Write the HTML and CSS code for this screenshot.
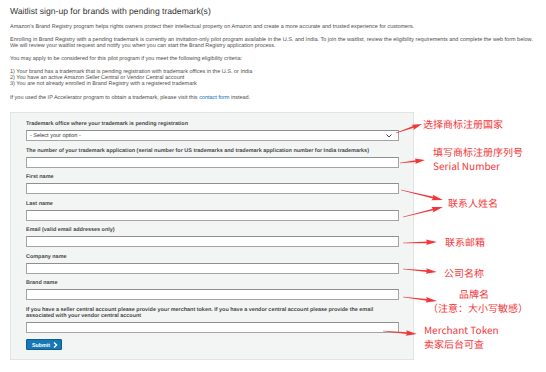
FILE: index.html
```html
<!DOCTYPE html>
<html lang="en">
<head>
<meta charset="utf-8">
<title>Waitlist sign-up</title>
<link rel="stylesheet" href="styles.css">
</head>
<body>
<div class="page">
  <h1 class="title">Waitlist sign-up for brands with pending trademark(s)</h1>
  <p class="intro">Amazon's Brand Registry program helps rights owners protect their intellectual property on Amazon and create a more accurate and trusted experience for customers.</p>
  <p>Enrolling in Brand Registry with a pending trademark is currently an invitation-only pilot program available in the U.S. and India. To join the waitlist, review the eligibility requirements and complete the web form below. We will review your waitlist request and notify you when you can start the Brand Registry application process.</p>
  <p>You may apply to be considered for this pilot program if you meet the following eligibility criteria:</p>
  <p>1) Your brand has a trademark that is pending registration with trademark offices in the U.S. or India<br>2) You have an active Amazon Seller Central or Vendor Central account<br>3) You are not already enrolled in Brand Registry with a registered trademark</p>
  <p class="last">If you used the IP Accelerator program to obtain a trademark, please visit this <a href="#" class="link">contact form</a> instead.</p>

  <form class="panel">
    <div class="field">
      <label class="label">Trademark office where your trademark is pending registration</label>
      <div class="select"><span>- Select your option -</span>
        <svg class="chev" width="6" height="4" viewBox="0 0 6 4"><path d="M0.5 0.5 L3 3 L5.5 0.5" fill="none" stroke="#333" stroke-width="0.9"/></svg>
      </div>
    </div>
    <div class="field">
      <label class="label">The number of your trademark application (serial number for US trademarks and trademark application number for India trademarks)</label>
      <div class="input"></div>
    </div>
    <div class="field">
      <label class="label">First name</label>
      <div class="input"></div>
    </div>
    <div class="field">
      <label class="label">Last name</label>
      <div class="input"></div>
    </div>
    <div class="field">
      <label class="label">Email (valid email addresses only)</label>
      <div class="input"></div>
    </div>
    <div class="field">
      <label class="label">Company name</label>
      <div class="input"></div>
    </div>
    <div class="field">
      <label class="label">Brand name</label>
      <div class="input"></div>
    </div>
    <div class="field">
      <label class="label">If you have a seller central account please provide your merchant token. If you have a vendor central account please provide the email associated with your vendor central account</label>
      <div class="input"></div>
    </div>
    <button type="button" class="submit">Submit
      <svg width="5" height="6" viewBox="0 0 5 6"><path d="M1 0.6 L3.6 3 L1 5.4" fill="none" stroke="#fff" stroke-width="1.3"/></svg>
    </button>
  </form>
</div>

<svg class="notes" width="546" height="372" viewBox="0 0 546 372">
  <g fill="#f2383a">
    <path transform="translate(396 133) rotate(-19.1)" d="M0 -0.35 L18.5 -0.9 L17.5 -2.8 L27.5 0 L17.5 2.8 L18.5 0.9 L0 0.35 Z"/>
    <path transform="translate(400 163) rotate(-6.8)" d="M0 -0.35 L16 -0.9 L15 -2.8 L25.2 0 L15 2.8 L16 0.9 L0 0.35 Z"/>
    <path transform="translate(401 190) rotate(13.4)" d="M0 -0.35 L33 -0.9 L32 -2.8 L43.2 0 L32 2.8 L33 0.9 L0 0.35 Z"/>
    <path transform="translate(403 217) rotate(-14)" d="M0 -0.35 L31 -0.9 L30 -2.8 L41.2 0 L30 2.8 L31 0.9 L0 0.35 Z"/>
    <path transform="translate(403 243) rotate(-1.7)" d="M0 -0.35 L24 -0.9 L23 -2.8 L34 0 L23 2.8 L24 0.9 L0 0.35 Z"/>
    <path transform="translate(403 269) rotate(5)" d="M0 -0.35 L24 -0.9 L23 -2.8 L34 0 L23 2.8 L24 0.9 L0 0.35 Z"/>
    <path transform="translate(403 297) rotate(6.7)" d="M0 -0.35 L24 -0.9 L23 -2.8 L34.2 0 L23 2.8 L24 0.9 L0 0.35 Z"/>
    <path transform="translate(383 331) rotate(5)" d="M0 -0.35 L24 -0.9 L23 -2.8 L34 0 L23 2.8 L24 0.9 L0 0.35 Z"/>
  </g>
  <g class="note-text">
    <text x="423" y="127.5">选择商标注册国家</text>
    <text x="433" y="156">填写商标注册序列号</text>
    <text x="433" y="170">Serial Number</text>
    <text x="448" y="206.5">联系人姓名</text>
    <text x="445" y="245.5">联系邮箱</text>
    <text x="444" y="276.5">公司名称</text>
    <text x="459" y="298">品牌名</text>
    <text x="428" y="312">（注意：大小写敏感）</text>
    <text x="424" y="334">Merchant Token</text>
    <text x="424" y="348">卖家后台可查</text>
  </g>
</svg>
</body>
</html>
```

FILE: styles.css
```css
html, body {
  margin: 0;
  padding: 0;
  background: #ffffff;
}

body {
  font-family: "Liberation Sans", Arial, sans-serif;
  color: #444;
  position: relative;
  width: 546px;
  height: 372px;
  overflow: hidden;
  text-rendering: geometricPrecision;
}

.page {
  padding: 6px 0 0 10px;
  width: 524px;
}

.title {
  margin: 0;
  font-size: 8.6px;
  line-height: 10px;
  font-weight: normal;
  color: #333;
}

.page p {
  margin: 7px 0 0 0;
  font-size: 5.5px;
  line-height: 6px;
  color: #4d4d4d;
}

.page p.intro {
  margin-top: 8px;
}

.page p.last {
  margin-top: 8px;
}

.link {
  color: #0a6fb4;
  text-decoration: none;
}

.panel {
  margin-top: 11px;
  width: 404px;
  box-sizing: border-box;
  border: 1px solid #e2e3e3;
  background: #f3f4f4;
  padding: 8px 14px 9px 15px;
}

.field {
  margin-bottom: 6.5px;
}

.label {
  display: block;
  font-size: 5.45px;
  line-height: 6px;
  font-weight: bold;
  color: #4a4a4a;
  margin-bottom: 3px;
}

.input,
.select {
  box-sizing: border-box;
  height: 11px;
  background: #ffffff;
  border: 1px solid #a4a4a4;
  border-top-color: #8f8f8f;
}

.select {
  display: flex;
  align-items: center;
  justify-content: space-between;
  padding: 0 6px 0 3px;
  font-size: 5.5px;
  color: #333;
}

.chev {
  display: block;
}

.submit {
  display: flex;
  align-items: center;
  gap: 3px;
  height: 11px;
  width: 36px;
  box-sizing: border-box;
  padding: 0 0 0 5px;
  margin: 0;
  border: 1px solid #0b5e91;
  border-radius: 1px;
  background: #1678b6;
  color: #ffffff;
  font-family: "Liberation Sans", Arial, sans-serif;
  font-size: 5.3px;
  font-weight: bold;
}

.submit svg {
  display: block;
}

.notes {
  position: absolute;
  left: 0;
  top: 0;
  pointer-events: none;
}

.note-text {
  font-family: "Noto Sans CJK SC", "Noto Sans", sans-serif;
  font-size: 10px;
  fill: #f2383a;
}
```
